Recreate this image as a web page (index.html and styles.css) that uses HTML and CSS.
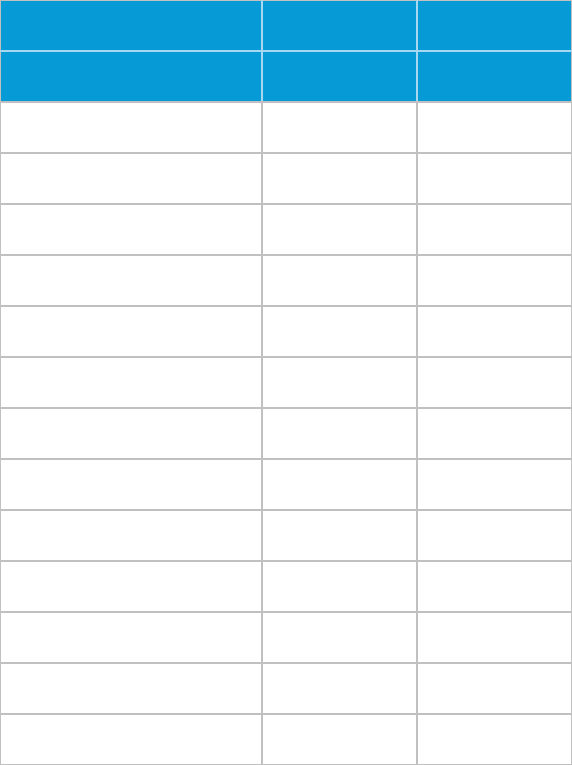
FILE: index.html
```html
<!DOCTYPE html>
<html>
<head>
<meta charset="utf-8">
<link rel="stylesheet" href="styles.css">
</head>
<body>
<table class="grid">
<thead>
<tr class="head-row"><th class="c1"></th><th class="c2"></th><th class="c3"></th></tr>
<tr class="head-row"><th class="c1"></th><th class="c2"></th><th class="c3"></th></tr>
</thead>
<tbody>
<tr><td></td><td></td><td></td></tr>
<tr><td></td><td></td><td></td></tr>
<tr><td></td><td></td><td></td></tr>
<tr><td></td><td></td><td></td></tr>
<tr><td></td><td></td><td></td></tr>
<tr><td></td><td></td><td></td></tr>
<tr><td></td><td></td><td></td></tr>
<tr><td></td><td></td><td></td></tr>
<tr><td></td><td></td><td></td></tr>
<tr><td></td><td></td><td></td></tr>
<tr><td></td><td></td><td></td></tr>
<tr><td></td><td></td><td></td></tr>
<tr><td></td><td></td><td></td></tr>
</tbody>
</table>
</body>
</html>
```
FILE: styles.css
```css
html, body {
  margin: 0;
  padding: 0;
  background: #ffffff;
  font-family: "Liberation Sans", Arial, sans-serif;
}
.grid {
  border-collapse: collapse;
  width: 571px;
  margin: -1px 0 0 -1px;
  table-layout: fixed;
}
.grid th, .grid td {
  height: 49px;
  padding: 0;
  border: 2px solid #c0c0c0;
}
.grid th {
  background: #069ad7;
  border-color: #a6d9f1;
}
.grid thead tr:first-child th { border-top-color: #c0c0c0; }
.grid thead tr:last-child th { border-bottom-color: #c0c0c0; }
.grid th:first-child { border-left-color: #c0c0c0; }
.grid th:last-child { border-right-color: #c0c0c0; }
.c1 { width: 260px; }
.c2 { width: 153px; }
.c3 { width: 153px; }
```
